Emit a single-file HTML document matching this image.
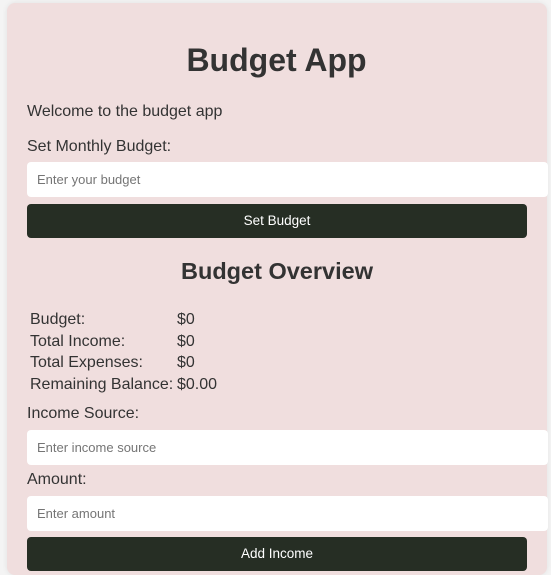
<!DOCTYPE html>
<html><head><style>
html,body{margin:0;height:575px;overflow:hidden;}
body{background:#f4f4f4;font-family:"Liberation Sans",Arial,sans-serif;color:#333;}
.card{position:absolute;left:7px;top:3px;width:540px;height:572px;background:#f0dede;border-radius:8px;box-shadow:0 0 6px rgba(0,0,0,0.08);}
.a{position:absolute;white-space:nowrap;}
.in{position:absolute;left:27px;width:521px;height:35px;background:#fff;border-radius:4px;box-sizing:border-box;padding-left:10px;font-size:13px;color:#757575;line-height:35px;}
.btn{position:absolute;left:27px;width:500px;height:34px;background:#262e24;border-radius:4px;color:#fff;font-size:13.5px;line-height:34px;text-align:center;}
.lbl{font-size:16px;color:#333;}
</style></head><body>
<div class="card"></div>
<div class="a" style="left:0;width:553px;text-align:center;top:42px;font-size:32px;font-weight:bold;">Budget App</div>
<div class="a lbl" style="left:27px;top:103px;">Welcome to the budget app</div>
<div class="a lbl" style="left:27px;top:138px;">Set Monthly Budget:</div>
<div class="in" style="top:162px;">Enter your budget</div>
<div class="btn" style="top:204px;">Set Budget</div>
<div class="a" style="left:0;width:554px;text-align:center;top:258px;font-size:23.5px;font-weight:bold;">Budget Overview</div>
<div class="a lbl" style="left:30px;top:309px;line-height:21.7px;">Budget:<br>Total Income:<br>Total Expenses:<br>Remaining Balance:</div>
<div class="a lbl" style="left:177px;top:309px;line-height:21.7px;">$0<br>$0<br>$0<br>$0.00</div>
<div class="a lbl" style="left:27px;top:405px;">Income Source:</div>
<div class="in" style="top:430px;">Enter income source</div>
<div class="a lbl" style="left:27px;top:471px;">Amount:</div>
<div class="in" style="top:496px;">Enter amount</div>
<div class="btn" style="top:537px;">Add Income</div>
</body></html>
